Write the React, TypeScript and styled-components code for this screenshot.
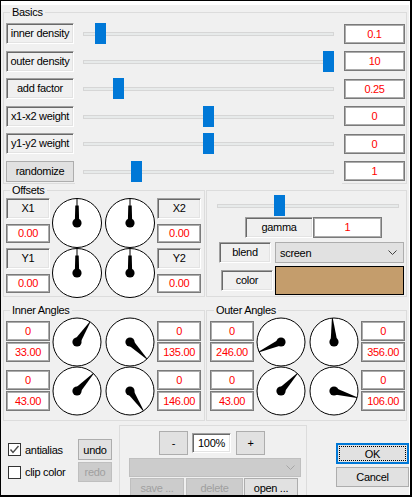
import React from 'react';
import styled, { createGlobalStyle, css } from 'styled-components';

type BasicRowType = {
    label: string
    value: string
    pos: number
    button?: boolean
}

type DialRowType = {
    left: string[]
    angles: [number, number]
    right: string[]
}

const basics: BasicRowType[] = [
    { label: 'inner density', value: '0.1', pos: 0.05 },
    { label: 'outer density', value: '10', pos: 1 },
    { label: 'add factor', value: '0.25', pos: 0.125 },
    { label: 'x1-x2 weight', value: '0', pos: 0.5 },
    { label: 'y1-y2 weight', value: '0', pos: 0.5 },
    { label: 'randomize', value: '1', pos: 0.2, button: true },
]

const offsets: DialRowType[] = [
    { left: ['X1', '0.00'], angles: [0, 0], right: ['X2', '0.00'] },
    { left: ['Y1', '0.00'], angles: [0, 0], right: ['Y2', '0.00'] },
]

const innerAngles: DialRowType[] = [
    { left: ['0', '33.00'], angles: [33, 135], right: ['0', '135.00'] },
    { left: ['0', '43.00'], angles: [43, 146], right: ['0', '146.00'] },
]

const outerAngles: DialRowType[] = [
    { left: ['0', '246.00'], angles: [246, 356], right: ['0', '356.00'] },
    { left: ['0', '43.00'], angles: [43, 106], right: ['0', '106.00'] },
]

const GlobalStyle = createGlobalStyle`
  html, body {
    margin: 0;
    padding: 0;
    background: #fff;
  }
  body {
    font-family: "Liberation Sans", Arial, sans-serif;
    font-size: 11px;
    letter-spacing: -0.3px;
    color: #000;
  }
  * {
    box-sizing: border-box;
  }
`

const Gauge = ({ angle, offset }: { angle: number, offset?: boolean }) => {
    const needle = offset
        ? 'M22.8 25 L23.3 7.5 L24.5 7.5 L24.5 0.5 L25.5 0.5 L25.5 7.5 L26.7 7.5 L27.2 25 Z'
        : 'M21.6 25 L24.6 1 L25.4 1 L28.4 25 Z'
    return (
        <GaugeSvg viewBox="0 0 50 50">
            <circle cx="25" cy="25" r={offset ? 24.5 : 24} fill="#fff" stroke="#000" strokeWidth="1" />
            <path d={needle} fill="#000" transform={`rotate(${angle} 25 25)`} />
            <circle cx="25" cy="25" r="4.6" fill="#000" />
        </GaugeSvg>
    )
}

const Slider = (props: { pos: number, margin: string, cover?: boolean }) => (
    <SliderBox $margin={props.margin} $cover={props.cover}>
        <Track />
        <Thumb style={{ left: `calc((100% - 11px) * ${props.pos})` }} />
    </SliderBox>
)

const Chevron = ({ disabled }: { disabled?: boolean }) => (
    <svg width="9" height="5" viewBox="0 0 9 5">
        <polyline points="0.5,0.5 4.5,4.5 8.5,0.5" fill="none" stroke={disabled ? '#a6a6a6' : '#404040'} strokeWidth="1" />
    </svg>
)

const Check = () => (
    <svg width="11" height="11" viewBox="0 0 11 11">
        <polyline points="1.5,5.5 4,8.5 9.5,2" fill="none" stroke="#4a4a4a" strokeWidth="1.4" />
    </svg>
)

const DialRows = ({ rows, offset }: { rows: DialRowType[], offset?: boolean }) => (
    <DialGrid $rowH={offset ? 50 : 49} $offset={offset}>
        {rows.map((row, i) => (
            <React.Fragment key={i}>
                <BoxStack $offset={offset}>
                    {offset ? <StaticLabel $w={44}>{row.left[0]}</StaticLabel> : <ValueBox $w={44} $h={20}>{row.left[0]}</ValueBox>}
                    <ValueBox $w={44} $h={offset ? 19 : 20}>{row.left[1]}</ValueBox>
                </BoxStack>
                <Gauge angle={row.angles[0]} offset={offset} />
                <Gauge angle={row.angles[1]} offset={offset} />
                <BoxStack $offset={offset}>
                    {offset ? <StaticLabel $w={44}>{row.right[0]}</StaticLabel> : <ValueBox $w={44} $h={20}>{row.right[0]}</ValueBox>}
                    <ValueBox $w={44} $h={offset ? 19 : 20}>{row.right[1]}</ValueBox>
                </BoxStack>
            </React.Fragment>
        ))}
    </DialGrid>
)

export default function App() {
    return (
        <>
            <GlobalStyle />
            <Window>
                <Frame>
                    <Basics>
                        <Legend>Basics</Legend>
                        <BasicRows>
                            {basics.map(r => (
                                <BasicRow key={r.label}>
                                    {r.button
                                        ? <Button $w={68} $h={21}>{r.label}</Button>
                                        : <StaticLabel $w={68}>{r.label}</StaticLabel>}
                                    <Slider pos={r.pos} margin="0 10px 0 9px" cover={r.button} />
                                    <ValueBox $w={61} $h={20}>{r.value}</ValueBox>
                                </BasicRow>
                            ))}
                        </BasicRows>
                    </Basics>

                    <PanelRow>
                        <OffsetsGroup>
                            <Legend>Offsets</Legend>
                            <DialRows rows={offsets} offset />
                        </OffsetsGroup>
                        <GammaGroup>
                            <Slider pos={0.335} margin="0 7px 0 10px" />
                            <FieldRow $indent={38} $gap={0} $top={1}>
                                <StaticLabel $w={68}>gamma</StaticLabel>
                                <ValueBox $w={69} $h={21}>1</ValueBox>
                            </FieldRow>
                            <FieldRow $indent={12} $gap={4} $top={4}>
                                <StaticLabel $w={52}>blend</StaticLabel>
                                <Select $w={129} $h={21}>
                                    <span>screen</span>
                                    <Chevron />
                                </Select>
                            </FieldRow>
                            <FieldRow $indent={14} $gap={2} $top={3}>
                                <StaticLabel $w={52}>color</StaticLabel>
                                <Swatch />
                            </FieldRow>
                        </GammaGroup>
                    </PanelRow>

                    <AnglesRow>
                        <AnglesGroup $left={2}>
                            <Legend>Inner Angles</Legend>
                            <DialRows rows={innerAngles} />
                        </AnglesGroup>
                        <AnglesGroup $left={3}>
                            <Legend>Outer Angles</Legend>
                            <DialRows rows={outerAngles} />
                        </AnglesGroup>
                    </AnglesRow>

                    <BottomRow>
                        <Options>
                            <CheckRow>
                                <CheckBox><Check /></CheckBox>
                                <span>antialias</span>
                            </CheckRow>
                            <Button $w={34} $h={21}>undo</Button>
                            <CheckRow>
                                <CheckBox />
                                <span>clip color</span>
                            </CheckRow>
                            <Button $w={34} $h={20} disabled>redo</Button>
                        </Options>

                        <ViewGroup>
                            <ZoomRow>
                                <Button $w={29} $h={24}>-</Button>
                                <ZoomField>100%</ZoomField>
                                <Button $w={29} $h={24}>+</Button>
                            </ZoomRow>
                            <PresetSelect $w={172} $h={19} $disabled>
                                <span />
                                <Chevron disabled />
                            </PresetSelect>
                            <FileRow>
                                <Button $w={54} $h={20} disabled>save ...</Button>
                                <Button $w={57} $h={20} disabled>delete</Button>
                                <Button $w={54} $h={20}>open ...</Button>
                            </FileRow>
                        </ViewGroup>

                        <DialogButtons>
                            <DefaultButton $w={73} $h={21}>OK</DefaultButton>
                            <Button $w={73} $h={20}>Cancel</Button>
                        </DialogButtons>
                    </BottomRow>
                </Frame>
            </Window>
        </>
    )
}

const Window = styled.div`
  width: 412px;
  height: 497px;
  border: 1px solid #000;
  border-right-width: 2px;
  border-bottom-width: 2px;
  overflow: hidden;
`

const Frame = styled.div`
  height: 100%;
  background: #f0f0f0;
  border-top: 4px solid #fff;
  border-right: 1px solid #fff;
  overflow: hidden;
`

const Group = styled.fieldset`
  margin: 0;
  min-width: 0;
  border: 1px solid #dcdcdc;
`

const Legend = styled.legend`
  margin-left: 4px;
  padding: 0 2px;
  line-height: 13px;
`

const Basics = styled(Group)`
  margin: 1px 2px 0;
  padding: 4px 1px 1px 2px;
`

const BasicRows = styled.div`
  display: flex;
  flex-direction: column;
  gap: 6.5px;
`

const BasicRow = styled.div`
  display: grid;
  grid-template-columns: 68px 1fr 61px;
  align-items: center;
  height: 21px;
`

const StaticLabel = styled.div<{ $w: number, $h?: number }>`
  width: ${p => p.$w}px;
  height: ${p => p.$h ?? 21}px;
  line-height: ${p => (p.$h ?? 21) - 2}px;
  text-align: center;
  white-space: nowrap;
  overflow: hidden;
  background: #f0f0f0;
  border: 1px solid;
  border-color: #a0a0a0 #fff #fff #a0a0a0;
  box-shadow: inset 1px 1px 0 #696969, inset -1px -1px 0 #e3e3e3;
`

const ValueBox = styled.div<{ $w: number, $h: number }>`
  width: ${p => p.$w}px;
  height: ${p => p.$h}px;
  line-height: ${p => p.$h - 2}px;
  text-align: center;
  color: #f00;
  background: #fff;
  border: 1px solid #7a7a7a;
  box-shadow: inset 0 0 0 1px #acacac;
`

const Button = styled.button<{ $w: number, $h: number }>`
  width: ${p => p.$w}px;
  height: ${p => p.$h}px;
  padding: 0;
  font: inherit;
  letter-spacing: inherit;
  color: #000;
  background: #e1e1e1;
  border: 1px solid #adadad;
  border-radius: 0;

  &:disabled {
    color: #a0a0a0;
    background: #cccccc;
    border-color: #bfbfbf;
  }
`

const DefaultButton = styled(Button)`
  position: relative;
  border: 2px solid #0078d7;

  &::after {
    content: '';
    position: absolute;
    inset: 1px;
    border: 1px dotted #000;
  }
`

const SliderBox = styled.div<{ $margin: string, $cover?: boolean }>`
  position: relative;
  height: 21px;
  margin: ${p => p.$margin};

  ${p => p.$cover && css`
    &::after {
      content: '';
      position: absolute;
      left: -8px;
      right: -8px;
      top: 21px;
      height: 4px;
      background: #f0f0f0;
    }
  `}
`

const Track = styled.div`
  position: absolute;
  left: 0;
  right: 0;
  top: 9px;
  height: 4px;
  background: #e7eaea;
  border: 1px solid #d6d6d6;
`

const Thumb = styled.div`
  position: absolute;
  top: 0;
  width: 11px;
  height: 21px;
  background: #0078d7;
`

const PanelRow = styled.div`
  display: flex;
  gap: 1px;
  margin: 0 2px;
`

const OffsetsGroup = styled(Group)`
  width: 202px;
  padding: 1.5px 2px 0 2px;
`

const GammaGroup = styled(Group)`
  flex: 1;
  margin-top: 6.5px;
  padding: 4px 0 1px 0;
`

const FieldRow = styled.div<{ $indent: number, $gap: number, $top: number }>`
  display: flex;
  align-items: center;
  gap: ${p => p.$gap}px;
  margin: ${p => p.$top}px 0 0 ${p => p.$indent}px;
`

const Select = styled.div<{ $w: number, $h: number, $disabled?: boolean }>`
  width: ${p => p.$w}px;
  height: ${p => p.$h}px;
  display: flex;
  align-items: center;
  justify-content: space-between;
  padding: 0 6px 0 4px;
  background: ${p => p.$disabled ? '#cccccc' : '#e1e1e1'};
  border: 1px solid ${p => p.$disabled ? '#bfbfbf' : '#adadad'};
`

const Swatch = styled.div`
  width: 129px;
  height: 29px;
  background: #c49d6c;
  border: 1px solid #000;
`

const AnglesRow = styled.div`
  display: flex;
  gap: 1px;
  margin: 6.5px 2px 0;
`

const AnglesGroup = styled(Group)<{ $left: number }>`
  flex: 1;
  padding: 0 2px 5px ${p => p.$left}px;

  &:first-child {
    flex: 0 0 202px;
  }
`

const DialGrid = styled.div<{ $rowH: number, $offset?: boolean }>`
  display: grid;
  grid-template-columns: 44px 50px 50px 44px;
  grid-auto-rows: ${p => p.$rowH}px;
  column-gap: 2.4px;
  margin-bottom: ${p => p.$offset ? -2 : 0}px;
`

const GaugeSvg = styled.svg`
  display: block;
  width: 50px;
  height: 50px;
  overflow: visible;
`

const BoxStack = styled.div<{ $offset?: boolean }>`
  display: flex;
  flex-direction: column;
  gap: ${p => p.$offset ? 5 : 1}px;
  align-self: ${p => p.$offset ? 'start' : 'center'};
`

const BottomRow = styled.div`
  display: flex;
  align-items: flex-start;
`

const Options = styled.div`
  display: grid;
  grid-template-columns: 70px 34px;
  grid-template-rows: 21px 20px;
  row-gap: 2px;
  margin: 18.5px 0 0 7px;
`

const CheckRow = styled.label`
  display: flex;
  align-items: center;
  gap: 4px;
  white-space: nowrap;
`

const CheckBox = styled.span`
  width: 13px;
  height: 13px;
  display: flex;
  align-items: center;
  justify-content: center;
  background: #fff;
  border: 1px solid #333;
`

const ViewGroup = styled(Group)`
  width: 188px;
  height: 90px;
  margin: 4.5px 0 0 7px;
  padding: 5px 0 0 0;
`

const ZoomRow = styled.div`
  display: flex;
  align-items: center;
  gap: 4px;
  margin-left: 39px;

  & > :last-child {
    margin-left: 1px;
  }
`

const ZoomField = styled.div`
  width: 39px;
  height: 20px;
  line-height: 18px;
  text-align: center;
  background: #fff;
  border: 1px solid;
  border-color: #a0a0a0 #fff #fff #a0a0a0;
  box-shadow: inset 1px 1px 0 #696969, inset -1px -1px 0 #e3e3e3;
`

const PresetSelect = styled(Select)`
  margin: 3px 0 0 9px;
  padding-right: 5px;
`

const FileRow = styled.div`
  display: flex;
  margin: 1px 0 0 10px;

  & > :nth-child(2) {
    margin-left: 2px;
  }
  & > :nth-child(3) {
    margin-left: 1px;
  }
`

const DialogButtons = styled.div`
  display: flex;
  flex-direction: column;
  gap: 3px;
  margin: 22.5px 0 0 auto;
`
